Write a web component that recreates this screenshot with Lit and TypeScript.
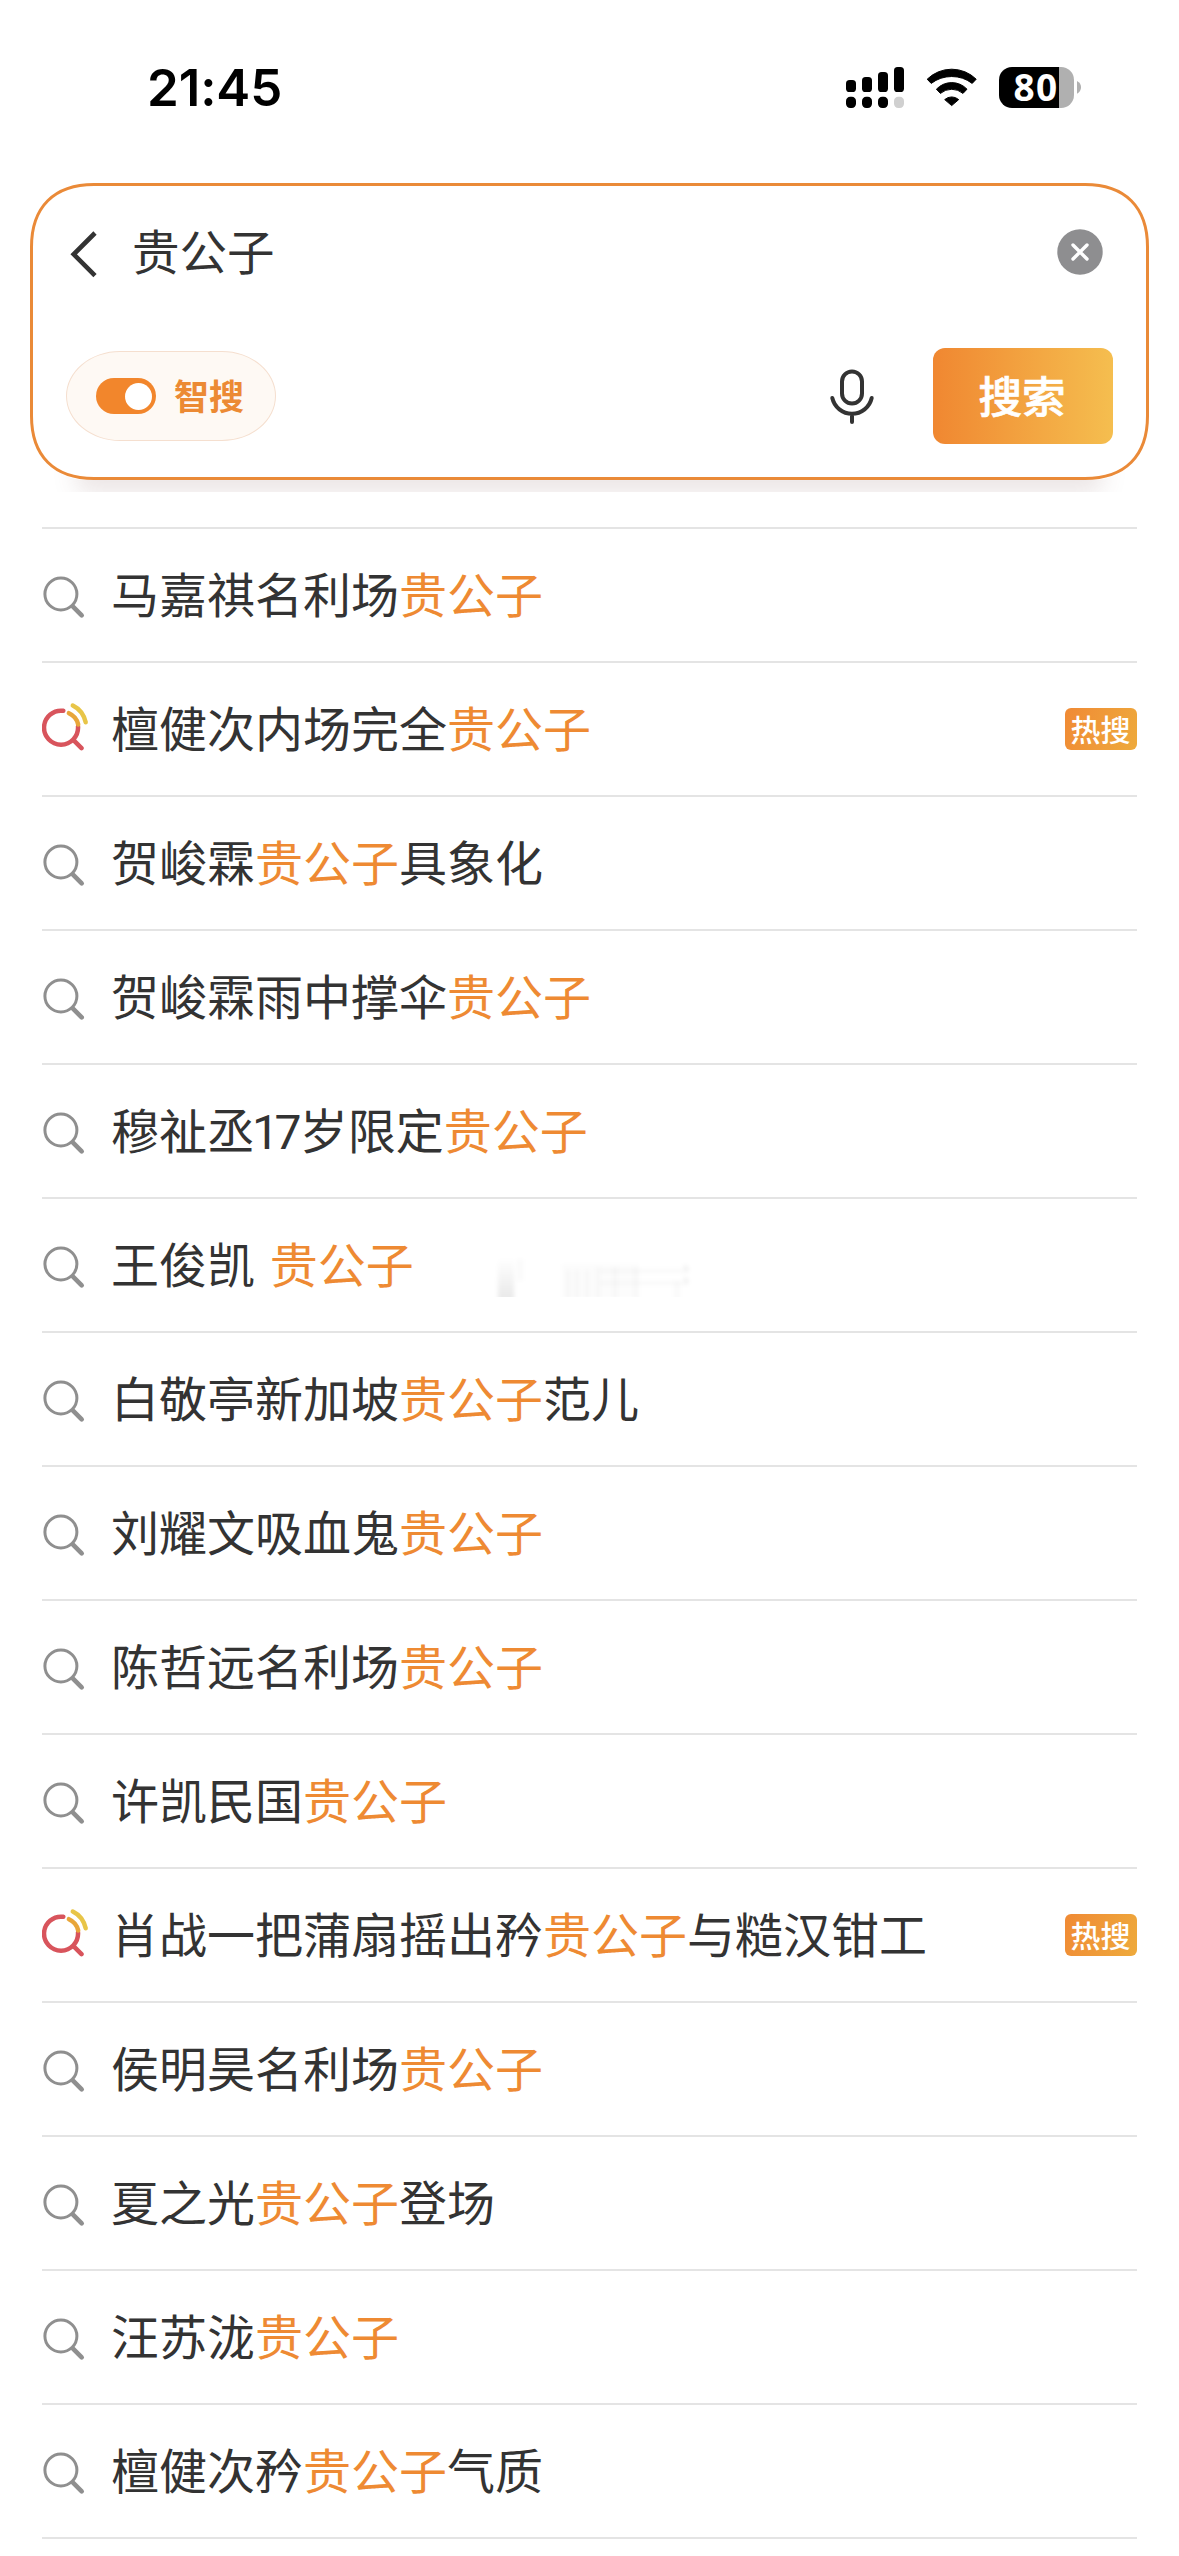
import { LitElement, html, css, svg } from "lit";
import { customElement, property } from "lit/decorators.js";

interface Suggestion {
  parts: string[];
  hot?: boolean;
}

const KEYWORD = "贵公子";

const SUGGESTIONS: Suggestion[] = [
  { parts: ["马嘉祺名利场", KEYWORD] },
  { parts: ["檀健次内场完全", KEYWORD], hot: true },
  { parts: ["贺峻霖", KEYWORD, "具象化"] },
  { parts: ["贺峻霖雨中撑伞", KEYWORD] },
  { parts: ["穆祉丞17岁限定", KEYWORD] },
  { parts: ["王俊凯 ", KEYWORD] },
  { parts: ["白敬亭新加坡", KEYWORD, "范儿"] },
  { parts: ["刘耀文吸血鬼", KEYWORD] },
  { parts: ["陈哲远名利场", KEYWORD] },
  { parts: ["许凯民国", KEYWORD] },
  { parts: ["肖战一把蒲扇摇出矜", KEYWORD, "与糙汉钳工"], hot: true },
  { parts: ["侯明昊名利场", KEYWORD] },
  { parts: ["夏之光", KEYWORD, "登场"] },
  { parts: ["汪苏泷", KEYWORD] },
  { parts: ["檀健次矜", KEYWORD, "气质"] },
];

@customElement("status-bar")
class StatusBar extends LitElement {
  static styles = css`
    :host {
      display: flex;
      justify-content: space-between;
      align-items: center;
      box-sizing: border-box;
      height: 175px;
      padding: 0 98px 0 147px;
      color: #000;
      font-family: Inter, "Liberation Sans", sans-serif;
    }
    .time {
      font-size: 51px;
      font-weight: 600;
      line-height: 60px;
      letter-spacing: -0.1px;
    }
    .icons {
      display: block;
      width: 235px;
      height: 41px;
      overflow: visible;
    }
    .level {
      font-family: "Noto Sans", "Open Sans", sans-serif;
      font-size: 37px;
      font-weight: 700;
      letter-spacing: 1.4px;
      fill: #fff;
    }
  `;

  render() {
    const tops = [13, 10, 5, 0];
    return html`
      <span class="time">21:45</span>
      <svg class="icons" viewBox="0 0 235 41">
        ${tops.map(
          (y, i) => svg`
            <rect x=${i * 16} y=${y} width="10" height=${25 - y} rx="3.6" />
            <rect x=${i * 16} y="29.7" width="10" height="11.3" rx="4.2" fill=${i === 3 ? "#d0d0d0" : "#000"} />`
        )}
        <g stroke="#000" stroke-width="1" stroke-linejoin="round">
          <path d="M81.2 12.2A35 35 0 0 1 130.2 12.2L126.2 16.4A34 34 0 0 0 85.2 16.4Z" />
          <path d="M90.4 22.2A21 21 0 0 1 121 22.2L117 26.4A17.5 17.5 0 0 0 94.4 26.4Z" />
          <path d="M98.7 32.6A10.5 10.5 0 0 1 112.7 32.6L105.7 38.6Z" />
        </g>
        <path d="M213 0H215A13 13 0 0 1 228 13V28A13 13 0 0 1 215 41H213Z" fill="#b0b0b0" />
        <path d="M213 0H166A13 13 0 0 0 153 13V28A13 13 0 0 0 166 41H213Z" />
        <path d="M231 14Q235 16 235 20.3T231 26.7Z" fill="#b0b0b0" />
        <text class="level" x="167.4" y="33.5">80</text>
      </svg>
    `;
  }
}

@customElement("search-card")
class SearchCard extends LitElement {
  @property() query = "";

  static styles = css`
    :host {
      display: block;
      box-sizing: border-box;
      height: 317px;
      padding: 8px 30px 12px;
      overflow: hidden;
    }
    .card {
      position: relative;
      box-sizing: border-box;
      display: flex;
      flex-direction: column;
      justify-content: space-between;
      height: 297px;
      padding: 37px 36px 36px;
      border-radius: 57px;
      box-shadow: 0 60px 24px -46px rgba(110, 60, 60, 0.13);
    }
    .outline {
      position: absolute;
      inset: 0;
      width: 1119px;
      height: 297px;
    }
    .row {
      position: relative;
      display: flex;
      align-items: center;
    }
    .query-row {
      height: 64px;
    }
    .back {
      width: 32px;
      height: 50px;
      margin-right: 34px;
      margin-top: 4px;
    }
    .query {
      flex: 1;
      font-size: 47.5px;
      line-height: 64px;
      padding-bottom: 4px;
      color: #333;
    }
    .clear {
      width: 46px;
      height: 46px;
      margin-right: 10px;
    }
    .smart {
      box-sizing: border-box;
      display: flex;
      align-items: center;
      width: 210px;
      height: 90px;
      padding-left: 29px;
      border: 1px solid #f5dfcf;
      border-radius: 54px / 45px;
      background: #fef9f4;
      color: #ec8a34;
      font-size: 35px;
      font-weight: 700;
    }
    .smart-label {
      padding-bottom: 3px;
    }
    .toggle {
      box-sizing: border-box;
      display: flex;
      justify-content: flex-end;
      width: 60px;
      height: 36px;
      padding: 4.5px;
      margin-right: 18px;
      border-radius: 18px;
      background: #f2862c;
    }
    .knob {
      width: 27px;
      height: 27px;
      border-radius: 50%;
      background: #fff;
    }
    .mic {
      width: 46px;
      height: 56px;
      margin-left: auto;
      margin-right: 58px;
    }
    .submit {
      box-sizing: border-box;
      display: flex;
      align-items: center;
      justify-content: center;
      width: 180px;
      height: 96px;
      padding: 0 2px 4px 0;
      border-radius: 12px;
      background: linear-gradient(90deg, #f08731, #f5be4f);
      color: #fff;
      font-size: 43.5px;
      font-weight: 500;
      -webkit-text-stroke: 0.7px #fff;
    }
  `;

  render() {
    return html`
      <div class="card">
        <svg class="outline" viewBox="0 0 1119 297">
          <path
            d="M1.5 64C1.5 24 24 1.5 64 1.5H1055C1095 1.5 1117.5 24 1117.5 64V233C1117.5 273 1095 295.5 1055 295.5H64C24 295.5 1.5 273 1.5 233Z"
            fill="#fff" stroke="#ea8a38" stroke-width="3" />
        </svg>
        <div class="row query-row">
          <svg class="back" viewBox="0 0 32 50" fill="none" stroke="#333" stroke-width="4.6">
            <path d="M29 4L7.7 25.3L29 46.6" />
          </svg>
          <span class="query">${this.query}</span>
          <svg class="clear" viewBox="0 0 46 46">
            <circle cx="23" cy="23" r="22.7" fill="#8e8e90" />
            <path d="M16 16L30 30M30 16L16 30" stroke="#fff" stroke-width="3.4" stroke-linecap="round" />
          </svg>
        </div>
        <div class="row">
          <div class="smart">
            <span class="toggle"><span class="knob"></span></span>
            <span class="smart-label">智搜</span>
          </div>
          <svg class="mic" viewBox="0 0 46 56" fill="none" stroke="#333" stroke-width="4" stroke-linecap="round">
            <rect x="13" y="3.5" width="20" height="32" rx="10" />
            <path d="M3.3 30A20.2 20.2 0 0 0 42.7 30M23 47V54" />
          </svg>
          <div class="submit">搜索</div>
        </div>
      </div>
    `;
  }
}

@customElement("suggestion-row")
class SuggestionRow extends LitElement {
  @property({ attribute: false }) item!: Suggestion;

  static styles = css`
    :host {
      box-sizing: border-box;
      display: flex;
      align-items: center;
      height: 134px;
      border-bottom: 2px solid #e4e4e4;
    }
    .icon {
      flex: none;
      width: 50px;
      height: 60px;
      margin-right: 19px;
    }
    .label {
      flex: 1;
      padding-bottom: 6px;
      font-size: 48px;
      line-height: 70px;
      white-space: pre;
      word-spacing: 4px;
      color: #333;
    }
    .digits {
      margin: 0 3px 0 -3px;
      font-family: Roboto, "Noto Sans CJK SC", sans-serif;
      line-height: 1;
      letter-spacing: -4.6px;
    }
    .match {
      color: #ee8a33;
    }
    .badge {
      box-sizing: border-box;
      display: flex;
      align-items: center;
      justify-content: center;
      width: 72px;
      height: 42px;
      padding: 0 1px 3px 0;
      border-radius: 6px;
      background: linear-gradient(110deg, #f08a35, #eeaa3c);
      color: #fff;
      font-size: 30px;
      font-weight: 500;
    }
  `;

  private icon() {
    if (this.item.hot) {
      return html`
        <svg class="icon" viewBox="0 0 50 60" fill="none" stroke-linecap="round" stroke-width="4.5">
          <path d="M21.3 11.8A17 17 0 1 0 36 27.5M32 41.7L39.5 49.2" stroke="#d8545c" />
          <path d="M26.9 14.2Q34.5 17.5 36.2 25.5" stroke="#e8a63a" />
          <path d="M30.8 6.5Q41 11.5 43.7 23.3" stroke="#e8c548" />
        </svg>
      `;
    }
    return html`
      <svg class="icon" viewBox="0 0 50 60" fill="none" stroke="#8f8f8f" stroke-linecap="round">
        <circle cx="18.9" cy="29" r="16" stroke-width="3" />
        <path d="M31 41.7L39.7 50.4" stroke-width="4.6" />
      </svg>
    `;
  }

  render() {
    return html`
      ${this.icon()}
      <span class="label">${this.item.parts.map((part) =>
        part === KEYWORD
          ? html`<span class="match">${part}</span>`
          : part
              .split(/(\d+)/)
              .map((t) => (/^\d+$/.test(t) ? html`<span class="digits">${t}</span>` : t))
      )}</span>
      ${this.item.hot ? html`<span class="badge">热搜</span>` : ""}
    `;
  }
}

@customElement("app-root")
class AppRoot extends LitElement {
  static styles = css`
    :host {
      position: relative;
      display: block;
      width: 1179px;
      height: 2556px;
      overflow: hidden;
      background: #fff;
      font-family: "Noto Sans CJK SC", sans-serif;
    }
    .list {
      margin: 35px 42px 0;
      border-top: 2px solid #e4e4e4;
    }
    .smudge {
      position: absolute;
      left: 480px;
      top: 1240px;
      width: 230px;
      height: 57px;
    }
  `;

  render() {
    return html`
      <status-bar></status-bar>
      <search-card .query=${KEYWORD}></search-card>
      <div class="list">
        ${SUGGESTIONS.map((item) => html`<suggestion-row .item=${item}></suggestion-row>`)}
      </div>
      <svg class="smudge" viewBox="0 0 230 57">
        <defs>
          <linearGradient id="fade" x1="0" y1="0" x2="0" y2="1">
            <stop offset="0" stop-color="#000" stop-opacity="0" />
            <stop offset="1" stop-color="#000" stop-opacity="0.09" />
          </linearGradient>
          <filter id="soft"><feGaussianBlur stdDeviation="1.9" /></filter>
        </defs>
        <g filter="url(#soft)">
          <rect x="18" y="18" width="16" height="42" fill="url(#fade)" />
          <rect x="37" y="19" width="6" height="22" fill="#000" opacity="0.02" />
          <rect x="82" y="24" width="76" height="34" fill="#000" opacity="0.01" />
          <path d="M88 30V60M97 30V60M107 30V60M118 27V60M135 27V60M156 27V60M197 42V60" stroke="#000" stroke-opacity="0.025" stroke-width="5" />
          <path d="M120 31H206M120 43H206" stroke="#000" stroke-opacity="0.04" stroke-width="2.5" />
          <path d="M204 26Q209 28 206 32M204 38Q209 40 206 44" fill="none" stroke="#000" stroke-opacity="0.09" stroke-width="2" />
        </g>
      </svg>
    `;
  }
}
